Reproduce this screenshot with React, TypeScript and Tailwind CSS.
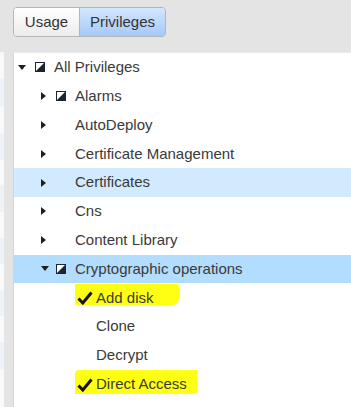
import React from "react";

type Node = {
  label: string;
  level: 0 | 1 | 2;
  arrow?: "right" | "down";
  box?: boolean;
  selected?: "light" | "strong";
  mark?: "a" | "b";
};

const rows: Node[] = [
  { label: "All Privileges", level: 0, arrow: "down", box: true },
  { label: "Alarms", level: 1, arrow: "right", box: true },
  { label: "AutoDeploy", level: 1, arrow: "right" },
  { label: "Certificate Management", level: 1, arrow: "right" },
  { label: "Certificates", level: 1, arrow: "right", selected: "light" },
  { label: "Cns", level: 1, arrow: "right" },
  { label: "Content Library", level: 1, arrow: "right" },
  { label: "Cryptographic operations", level: 1, arrow: "down", box: true, selected: "strong" },
  { label: "Add disk", level: 2, mark: "a" },
  { label: "Clone", level: 2 },
  { label: "Decrypt", level: 2 },
  { label: "Direct Access", level: 2, mark: "b" },
  { label: "Encrypt", level: 2 },
];

const Arrow = ({ dir }: { dir: "right" | "down" }) =>
  dir === "right" ? (
    <svg width="5" height="8" viewBox="0 0 5 8">
      <path d="M0 0 L5 4 L0 8 Z" fill="#1f1f1f" />
    </svg>
  ) : (
    <svg width="8" height="5" viewBox="0 0 8 5">
      <path d="M0 0 L8 0 L4 5 Z" fill="#1f1f1f" />
    </svg>
  );

const PartialBox = () => (
  <svg width="10" height="10" viewBox="0 0 10 10">
    <rect x="0.5" y="0.5" width="9" height="9" fill="#fff" stroke="#1c2433" />
    <path d="M9.5 0.5 L9.5 9.5 L0.5 9.5 Z" fill="#1c2433" />
  </svg>
);

const Check = () => (
  <svg width="16" height="14" viewBox="0 0 16 14">
    <path d="M1.5 7.5 L5.8 12 L14.5 1.5" fill="none" stroke="#161616" strokeWidth="3" strokeLinejoin="miter" />
  </svg>
);

const tints = [
  ["h-[28px]", false],
  ["h-[30px]", true],
  ["h-[27px]", false],
  ["h-[28px]", true],
  ["h-[27px]", false],
  ["h-[28px]", true],
  ["h-[27px]", false],
  ["h-[28px]", true],
  ["h-[28px]", false],
  ["h-[26px]", true],
  ["h-[28px]", false],
  ["h-[28px]", true],
  ["h-[40px]", false],
] as const;

const TreeRow = ({ row }: { row: Node }) => {
  const bg =
    row.selected === "strong"
      ? "bg-[#b3ddfe]"
      : row.selected === "light"
      ? "bg-[#d2eafd]"
      : "";

  if (row.level === 2) {
    if (row.mark) {
      const hl =
        row.mark === "a"
          ? "h-[21px] -mt-[7px] pr-[25px] rounded-tr-[2px] rounded-br-[6px]"
          : "h-[24px] -mt-[4px] pr-[10px] rounded-tl-[4px] rounded-br-[3px]";
      return (
        <div className="h-[28.8px] flex items-center pl-[61px]">
          <span className={`flex items-center pl-[2px] bg-[#ffff14] ${hl}`}>
            <span className={`w-[19px] flex items-center ${row.mark === "a" ? "mt-[7px]" : "mt-[5px]"}`}>
              <Check />
            </span>
            <span className={row.mark === "a" ? "mt-[7px]" : "mt-[5px]"}>{row.label}</span>
          </span>
        </div>
      );
    }
    return (
      <div className="h-[28.8px] flex items-center pl-[82px]">
        <span>{row.label}</span>
      </div>
    );
  }

  return (
    <div className={`h-[28.8px] flex items-center ${bg} ${row.level === 0 ? "pl-[4px]" : "pl-[27px]"}`}>
      <span className={`flex items-center ${row.level === 0 ? "w-[17px]" : "w-[15px]"}`}>
        {row.arrow && <Arrow dir={row.arrow} />}
      </span>
      <span className="w-[19px] flex items-center">{row.box && <PartialBox />}</span>
      <span>{row.label}</span>
    </div>
  );
};

export default function App() {
  return (
    <div
      className="w-[351px] h-[407px] overflow-hidden bg-[#e4e4e4] flex flex-col text-[15px] text-[#3a3a3a]"
      style={{ fontFamily: '"Liberation Sans", Arial, sans-serif' }}
    >
      <div className="h-[52px] shrink-0 pl-[13px] pt-[7px]">
        <div className="inline-flex h-[30px] rounded-[4px] border border-[#b5b5b5] overflow-hidden">
          <button className="w-[65px] flex items-center justify-center bg-gradient-to-b from-[#ffffff] to-[#ececec] text-[#333]">
            Usage
          </button>
          <button className="w-[86px] flex items-center justify-center border-l border-[#a7b8cc] bg-gradient-to-b from-[#d3e6fd] to-[#a6c9f8] text-[#333]">
            Privileges
          </button>
        </div>
      </div>
      <div className="flex flex-1 min-h-0">
        <div className="w-[4px] flex flex-col">
          {tints.map(([h, t], i) => (
            <div key={i} className={`${h} ${t ? "bg-[#edf2f9]" : "bg-[#f9f9f9]"}`} />
          ))}
        </div>
        <div className="w-[9px]" />
        <div className="flex-1 bg-white border-l border-t border-[#d6d6d6] border-t-[#ececec]">
          {rows.map((r) => (
            <TreeRow key={r.label} row={r} />
          ))}
        </div>
      </div>
    </div>
  );
}
